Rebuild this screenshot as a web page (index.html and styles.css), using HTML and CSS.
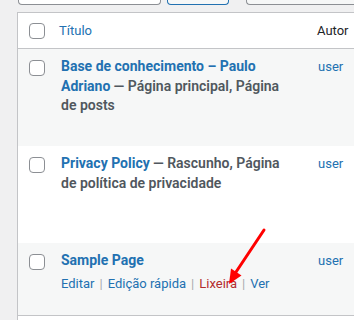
FILE: index.html
```html
<!DOCTYPE html>
<html lang="pt-BR">
<head>
	<meta charset="UTF-8">
	<title>Páginas</title>
	<link rel="stylesheet" href="styles.css">
</head>
<body>
	<div class="toolbar">
		<div class="search"></div>
		<div class="btn primary"></div>
		<div class="btn"></div>
	</div>
	<div class="list">
		<div class="row head">
			<div class="cell check"><span class="box"></span></div>
			<div class="cell title"><a href="javascript:;" class="sort">Título</a></div>
			<div class="cell author">Autor</div>
		</div>
		<div class="row alt tall">
			<div class="cell check"><span class="box"></span></div>
			<div class="cell title">
				<strong><a href="javascript:;" class="row-title">Base de conhecimento – Paulo Adriano</a> <span class="state">— Página principal, Página de posts</span></strong>
			</div>
			<div class="cell author"><a href="javascript:;">user</a></div>
		</div>
		<div class="row tall">
			<div class="cell check"><span class="box"></span></div>
			<div class="cell title">
				<strong><a href="javascript:;" class="row-title">Privacy Policy</a> <span class="state">— Rascunho, Página de política de privacidade</span></strong>
			</div>
			<div class="cell author"><a href="javascript:;">user</a></div>
		</div>
		<div class="row alt short">
			<div class="cell check"><span class="box"></span></div>
			<div class="cell title">
				<strong><a href="javascript:;" class="row-title">Sample Page</a></strong>
				<div class="actions">
					<a href="javascript:;">Editar</a><span class="sep">|</span><a href="javascript:;">Edição rápida</a><span class="sep">|</span><a href="javascript:;" class="trash">Lixeira</a><span class="sep">|</span><a href="javascript:;">Ver</a>
				</div>
			</div>
			<div class="cell author"><a href="javascript:;">user</a></div>
		</div>
		<div class="row foot"></div>
	</div>
	<!-- seta vermelha apontando para Lixeira -->
	<svg class="arrow" width="354" height="320" viewBox="0 0 354 320">
		<line x1="264" y1="230" x2="234" y2="275" stroke="#ff0000" stroke-width="3" stroke-linecap="round"/>
		<polygon points="229,284 231,268.5 241.5,275.5" fill="#ff0000"/>
	</svg>
</body>
</html>
```

FILE: styles.css
```css
html,body{
	margin: 0;padding: 0;overflow: hidden;
	width: 354px;height: 320px;
	background: #f0f0f1;
	font-family: Roboto, "Noto Sans", sans-serif;font-size: 13px;color: #3c434a;
}
a{
	color: #2271b1;text-decoration: none;
}
.toolbar{
	display: flex;align-items: flex-start;
	height: 12px;padding-left: 18px;
}
.search,.btn{
	height: 4px;
	border: 1px solid #8c8f94;border-top: none;
	border-radius: 0 0 4px 4px;
	background: #fff;
}
.search{
	width: 141px;
}
.btn{
	width: 60px;margin-left: 6px;background: #f6f7f7;
}
.btn.primary{
	border-color: #2271b1;
}
.btn:last-child{
	flex: 1;margin-left: 17px;
	border-right: none;border-radius: 0 0 0 4px;
}
.list{
	margin-left: 17px;
	border: 1px solid #c3c4c7;border-right: none;border-bottom: none;
	background: #fff;
}
.row{
	display: grid;grid-template-columns: 33px 258px 1fr;
}
.row.alt{
	background: #f6f7f7;
}
.row.head{
	height: 35px;border-bottom: 1px solid #c3c4c7;
}
.row.tall{
	height: 97px;
}
.row.short{
	height: 72px;
}
.row.foot{
	height: 4px;border-top: 1px solid #c3c4c7;
}
.cell{
	line-height: 19.5px;min-width: 0;
}
.check{
	padding: 11px 0 0 11px;
}
.head .check{
	padding-top: 10px;
}
.box{
	display: block;
	width: 14px;height: 14px;
	border: 1px solid #8c8f94;border-radius: 4px;
	background: #fff;
}
.title{
	padding: 8px 18px 8px 10px;
}
.head .title{
	padding: 8px;font-size: 13px;
}
.author{
	padding: 8px 9px;white-space: nowrap;
}
.head .author{
	padding-left: 8px;color: #1d2327;
}
.row-title{
	font-size: 14px;font-weight: 700;
}
.state{
	color: #50575e;font-size: 14px;font-weight: 600;
}
.actions{
	padding-top: 3px;font-size: 13px;
}
.sep{
	color: #a7aaad;margin: 0 5px;
}
.trash{
	color: #b32d2e;
}
.arrow{
	position: absolute;left: 0;top: 0;
	pointer-events: none;
}
```
